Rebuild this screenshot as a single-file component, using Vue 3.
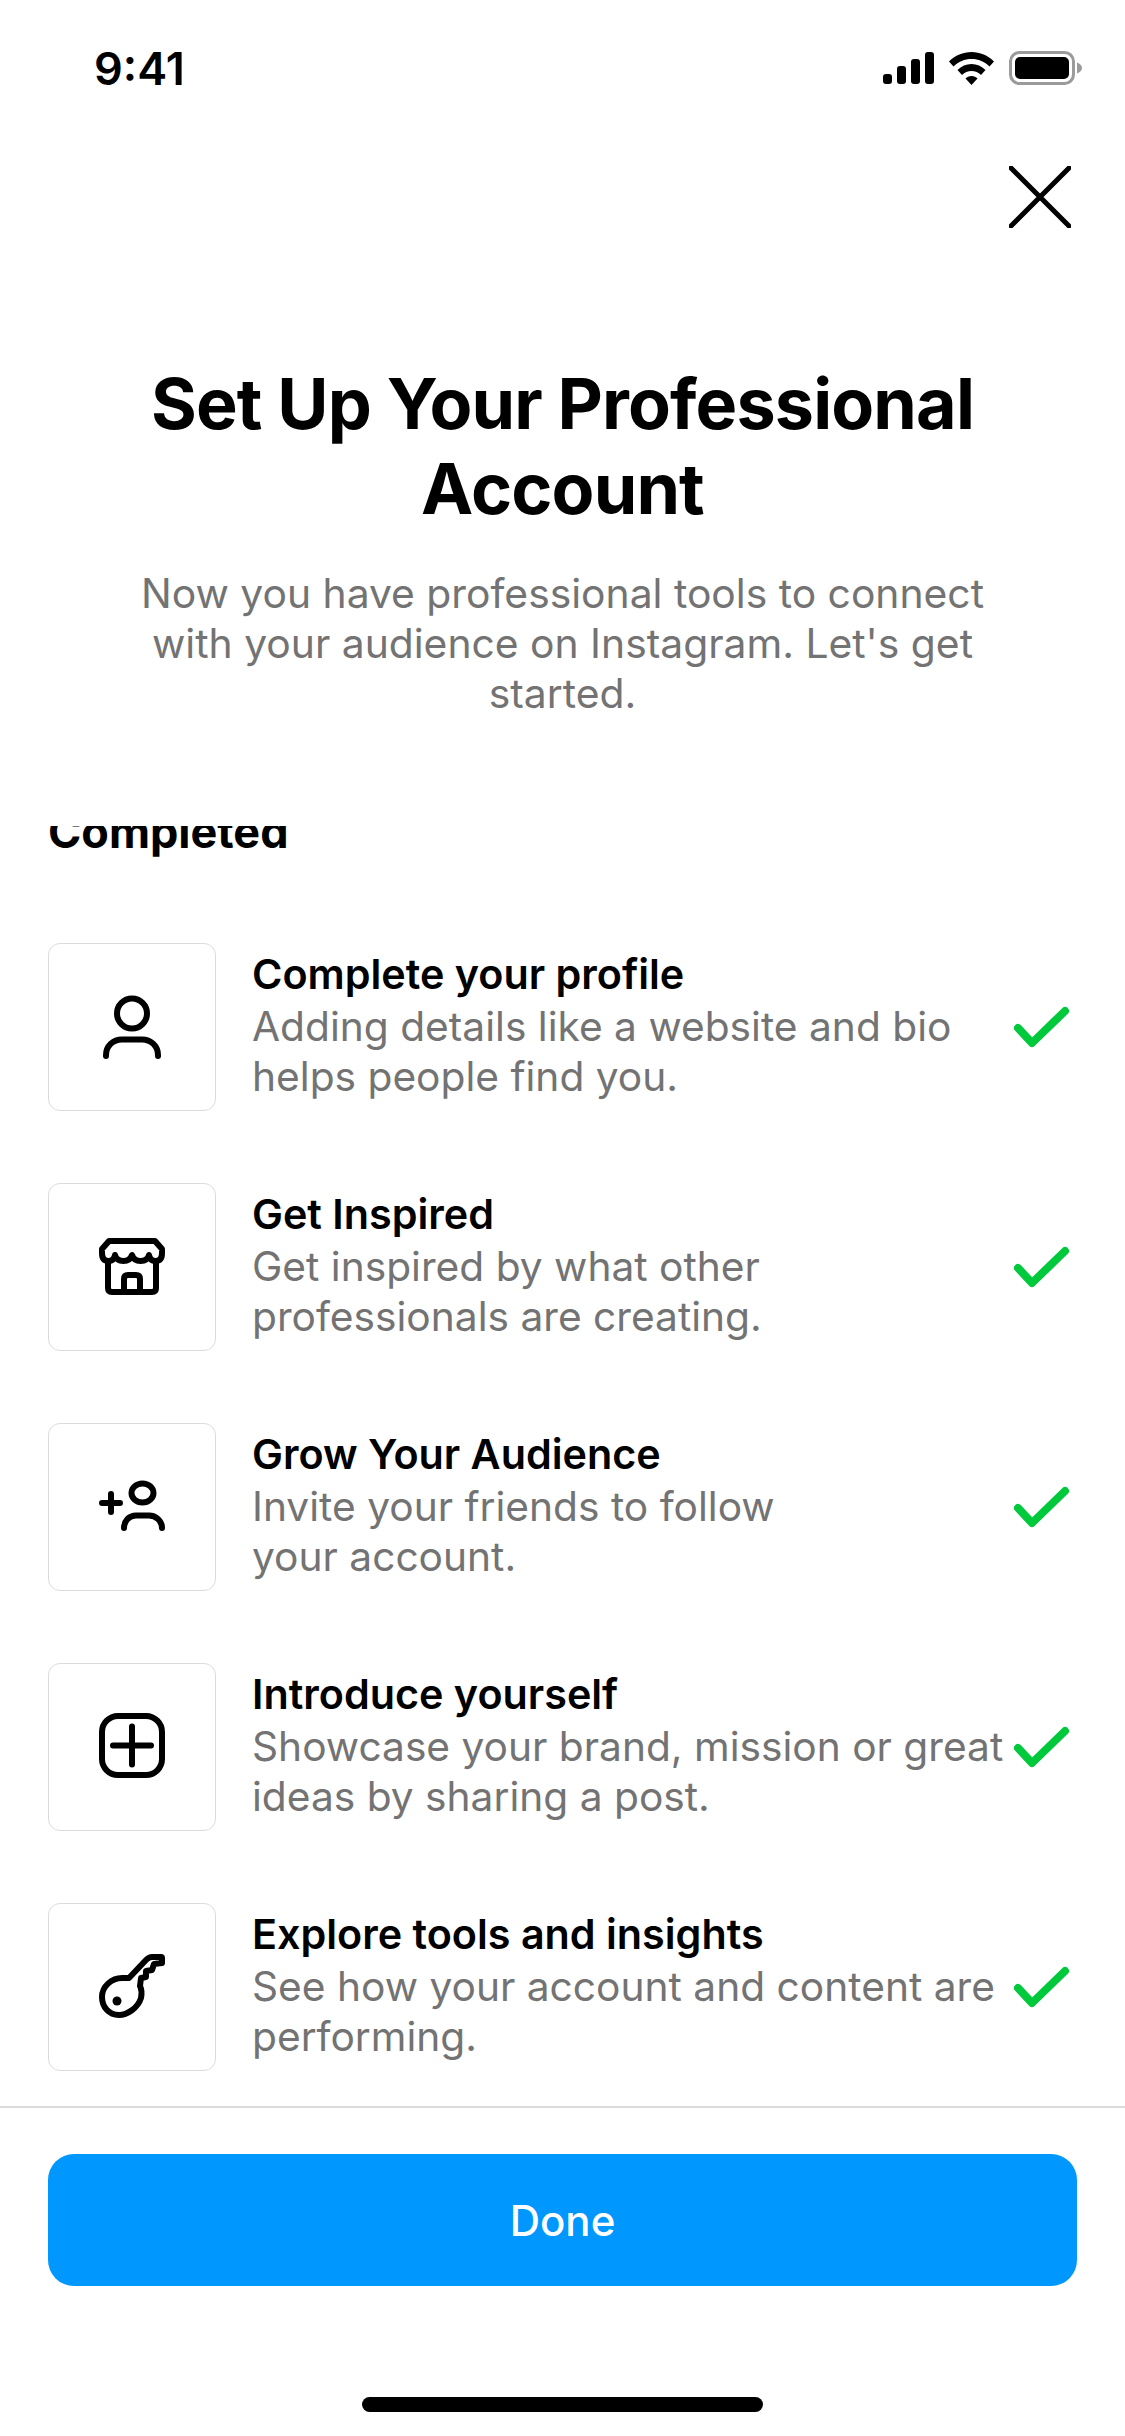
<script setup>
const items = [
  {
    icon: 'profile',
    title: 'Complete your profile',
    lines: ['Adding details like a website and bio', 'helps people find you.'],
  },
  {
    icon: 'shop',
    title: 'Get Inspired',
    lines: ['Get inspired by what other', 'professionals are creating.'],
  },
  {
    icon: 'invite',
    title: 'Grow Your Audience',
    lines: ['Invite your friends to follow', 'your account.'],
  },
  {
    icon: 'post',
    title: 'Introduce yourself',
    lines: ['Showcase your brand, mission or great', 'ideas by sharing a post.'],
  },
  {
    icon: 'key',
    title: 'Explore tools and insights',
    lines: ['See how your account and content are', 'performing.'],
  },
]
</script>

<template>
  <div class="screen">
    <div class="status-bar">
      <span class="time">9:41</span>
      <div class="status-icons">
        <svg width="51" height="32" viewBox="0 0 51 32">
          <rect x="0" y="22" width="9" height="10" rx="3" />
          <rect x="14" y="14" width="9" height="18" rx="3" />
          <rect x="28" y="7" width="9" height="25" rx="3" />
          <rect x="42" y="0" width="9" height="32" rx="3" />
        </svg>
        <svg width="45" height="33" viewBox="0 0 45 33">
          <path d="M22.500 0C14 0 6 3.500 0 9.500L4.500 14.500C9.500 9.500 15.500 7 22.500 7S35.500 9.500 40.500 14.500L45 9.500C39 3.500 31 0 22.500 0Z" />
          <path d="M22.500 12C17 12 12.500 14 8.500 18L13 23C15.500 20.500 19 19 22.500 19S29.500 20.500 32 23L36.500 18C32.500 14 28 12 22.500 12Z" />
          <path d="M22.500 24C20 24 18 25 16.500 26.500L22.500 33L28.500 26.500C27 25 25 24 22.500 24Z" />
        </svg>
        <svg width="73" height="34" viewBox="0 0 73 34">
          <rect x="1.500" y="1.500" width="63" height="31" rx="9" fill="none" stroke="#9b9b9b" stroke-width="3" />
          <rect x="6" y="6" width="54" height="22" rx="5" />
          <path d="M68 11.500c3 1 5 3 5 5.500s-2 4.500-5 5.500z" fill="#9b9b9b" />
        </svg>
      </div>
    </div>

    <div class="close-row">
      <svg width="62" height="62" viewBox="0 0 62 62" class="close">
        <path d="M2 2L60 60M60 2L2 60" />
      </svg>
    </div>

    <header class="intro">
      <h1>Set Up Your Professional<br />Account</h1>
      <p>Now you have professional tools to connect<br />with your audience on Instagram. Let's get<br />started.</p>
    </header>

    <div class="list-clip">
      <h2>Completed</h2>
      <ul class="list">
        <li v-for="item in items" :key="item.title" class="row">
          <div class="tile">
            <svg width="72" height="72" viewBox="-36 -36 72 72" class="glyph">
              <template v-if="item.icon === 'profile'">
                <circle cx="0" cy="-13.500" r="15" />
                <path d="M-26 29V28C-26 19-19 12.500-10 12.500H10C19 12.500 26 19 26 28V29" />
              </template>
              <template v-else-if="item.icon === 'shop'">
                <path d="M-23-26H23L30-18V-14Q30-6 23.500-6Q18-6 17-12Q15.500-6 8.500-6Q2-6 0-12Q-2-6-8.500-6Q-15.500-6-17-12Q-18-6-23.500-6Q-30-6-30-14V-18Z" />
                <path d="M-24-6V21Q-24 25-20 25H20Q24 25 24 21V-6" />
                <path d="M-8 25V12Q-8 8-4 8H4Q8 8 8 12V25" />
              </template>
              <template v-else-if="item.icon === 'invite'">
                <ellipse cx="10.500" cy="-14" rx="11" ry="9.500" />
                <path d="M-8 21C-8 14-3 8.500 4 8.500H17C24 8.500 30 14 30 21" />
                <path d="M-30-4H-12M-21-13V5" />
              </template>
              <template v-else-if="item.icon === 'post'">
                <rect x="-30" y="-31" width="60" height="59" rx="16" />
                <path d="M-19-1.500H19M0-20.500V17.500" />
              </template>
              <template v-else>
                <path d="M-3-9L14-27Q17-30 20-30H29Q30-30 30-29V-24L22-23L20-17L14-16V-10L9-9L8-1C10 3 10 6 9 11C6 21-5 28-13 28C-23 28-30 20-30 10C-30-1-20-9-10-9Z" />
                <ellipse cx="-15" cy="14" rx="4.500" ry="4.500" class="solid" />
              </template>
            </svg>
          </div>
          <div class="copy">
            <div class="title">{{ item.title }}</div>
            <div v-for="line in item.lines" :key="line" class="desc">{{ line }}</div>
          </div>
          <svg width="58" height="42" viewBox="0 0 58 42" class="check">
            <path d="M6 22L20 37L53 5" />
          </svg>
        </li>
      </ul>
    </div>

    <footer class="footer">
      <button class="done">Done</button>
      <div class="home-bar"></div>
    </footer>
  </div>
</template>

<style scoped>
.screen {
  width: 1125px;
  height: 2436px;
  display: flex;
  flex-direction: column;
  background: #fff;
  color: #000;
  font-family: Inter, 'Liberation Sans', sans-serif;
  overflow: hidden;
}

.status-bar {
  height: 136px;
  flex-shrink: 0;
  box-sizing: border-box;
  padding: 0 43px 0 94px;
  display: flex;
  align-items: center;
  justify-content: space-between;
}

.time {
  font-size: 45px;
  font-weight: 600;
}

.status-icons {
  display: flex;
  align-items: center;
  gap: 15px;
}

.close-row {
  display: flex;
  justify-content: flex-end;
  padding: 30px 54px 0 0;
}

.close {
  fill: none;
  stroke: #000;
  stroke-width: 5;
  stroke-linecap: round;
}

.intro {
  text-align: center;
  padding-top: 133px;
}

h1 {
  margin: 0;
  font-size: 70px;
  line-height: 85px;
  font-weight: 700;
  letter-spacing: -0.85px;
}

p {
  margin: 37px 0 0;
  font-size: 40.800px;
  line-height: 50px;
  color: #737373;
}

.list-clip {
  flex: 1;
  min-height: 0;
  margin-top: 108px;
  padding: 0 48px;
  overflow: hidden;
}

h2 {
  margin: -21px 0 0;
  font-size: 45px;
  line-height: 54px;
  font-weight: 700;
}

.list {
  list-style: none;
  margin: 83.500px 0 0;
  padding: 0;
  display: flex;
  flex-direction: column;
  gap: 72px;
}

.row {
  display: flex;
  align-items: center;
  height: 168px;
}

.tile {
  width: 168px;
  height: 168px;
  flex-shrink: 0;
  box-sizing: border-box;
  border: 1.500px solid #dbdbdb;
  border-radius: 12px;
  display: flex;
  align-items: center;
  justify-content: center;
}

.glyph {
  fill: none;
  stroke: #000;
  stroke-width: 6;
  stroke-linecap: round;
  stroke-linejoin: round;
}

.glyph .solid {
  fill: #000;
  stroke: none;
}

.copy {
  flex: 1;
  min-width: 0;
  margin-left: 36px;
  white-space: nowrap;
}

.title {
  font-size: 41.300px;
  line-height: 50px;
  font-weight: 600;
  margin-bottom: 3px;
  margin-top: -2px;
}

.desc {
  font-size: 40.700px;
  line-height: 50px;
  color: #737373;
}

.check {
  flex-shrink: 0;
  margin-right: 7px;
  fill: none;
  stroke: #00c93c;
  stroke-width: 8;
  stroke-linecap: round;
  stroke-linejoin: round;
}

.footer {
  height: 330px;
  flex-shrink: 0;
  box-sizing: border-box;
  border-top: 2px solid #dbdbdb;
  padding: 46px 48px 0;
}

.done {
  display: block;
  width: 100%;
  height: 132px;
  border: none;
  border-radius: 26px;
  background: #0097ff;
  color: #fff;
  font-family: inherit;
  font-size: 42px;
  font-weight: 500;
}

.home-bar {
  width: 401px;
  height: 15px;
  margin: 111px auto 0;
  border-radius: 8px;
  background: #000;
}
</style>
